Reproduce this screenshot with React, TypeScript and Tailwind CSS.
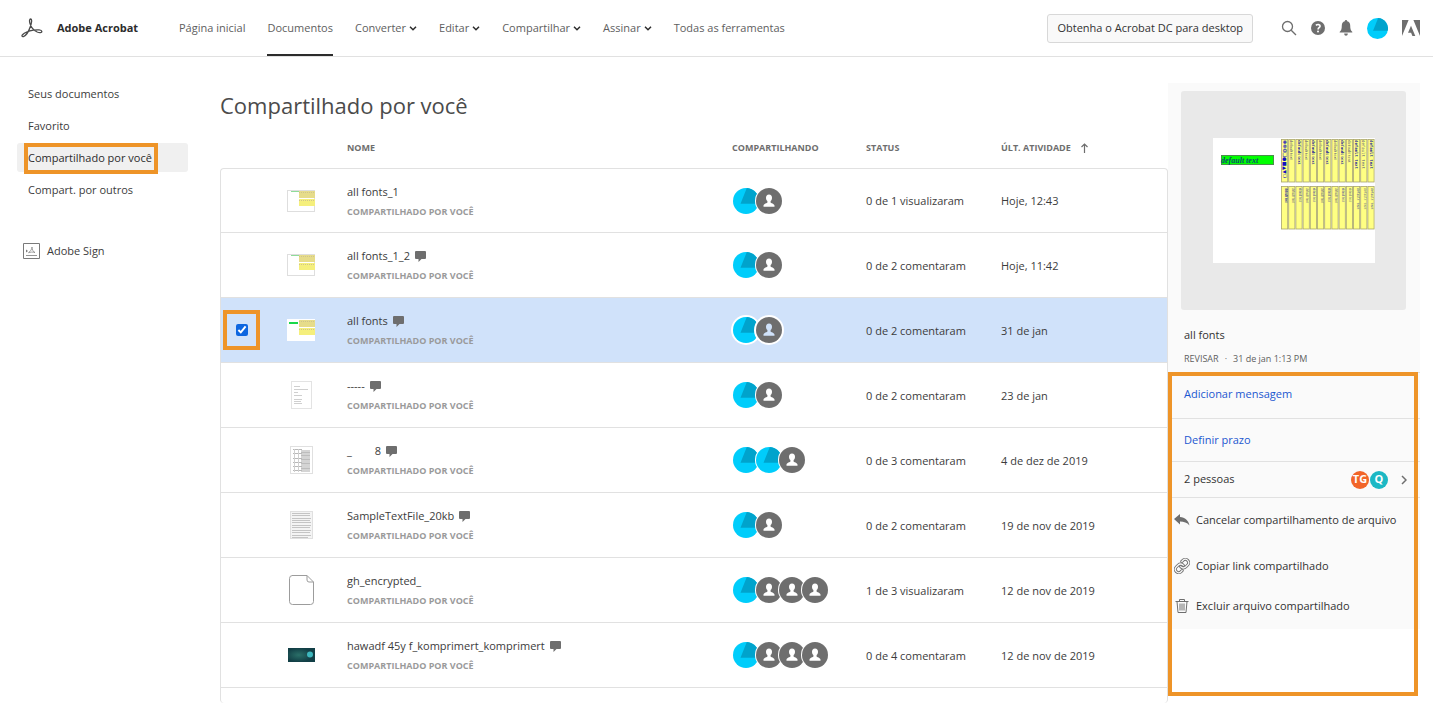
import { useState } from "react"

type Person = "avatar" | "guest"
type ThumbKind = "fonts" | "fontsBright" | "short" | "form" | "text" | "blank" | "photo"

type SharedFile = {
  name: string
  comment?: boolean
  thumb: ThumbKind
  people: Person[]
  status: string
  date: string
}

const files: SharedFile[] = [
  { name: "all fonts_1", thumb: "fonts", people: ["avatar", "guest"], status: "0 de 1 visualizaram", date: "Hoje, 12:43" },
  { name: "all fonts_1_2", comment: true, thumb: "fonts", people: ["avatar", "guest"], status: "0 de 2 comentaram", date: "Hoje, 11:42" },
  { name: "all fonts", comment: true, thumb: "fontsBright", people: ["avatar", "guest"], status: "0 de 2 comentaram", date: "31 de jan" },
  { name: "-----", comment: true, thumb: "short", people: ["avatar", "guest"], status: "0 de 2 comentaram", date: "23 de jan" },
  { name: "_        8", comment: true, thumb: "form", people: ["avatar", "avatar", "guest"], status: "0 de 3 comentaram", date: "4 de dez de 2019" },
  { name: "SampleTextFile_20kb", comment: true, thumb: "text", people: ["avatar", "guest"], status: "0 de 2 comentaram", date: "19 de nov de 2019" },
  { name: "gh_encrypted_", thumb: "blank", people: ["avatar", "guest", "guest", "guest"], status: "1 de 3 visualizaram", date: "12 de nov de 2019" },
  { name: "hawadf 45y f_komprimert_komprimert", comment: true, thumb: "photo", people: ["avatar", "guest", "guest", "guest"], status: "0 de 4 comentaram", date: "12 de nov de 2019" },
]

const navItems = [
  { label: "Página inicial" },
  { label: "Documentos", active: true },
  { label: "Converter", menu: true },
  { label: "Editar", menu: true },
  { label: "Compartilhar", menu: true },
  { label: "Assinar", menu: true },
  { label: "Todas as ferramentas" },
]

const sideItems = ["Seus documentos", "Favorito", "Compartilhado por você", "Compart. por outros"]

function AcrobatLogo() {
  return (
    <svg width="22" height="20" viewBox="0 0 22 20" fill="none" stroke="#4b4b4b" strokeWidth="1.3" aria-hidden="true">
      <path d="M9.8 1C8.300.9 8.300 3.200 9 5.600c1 3.400 4 6.900 7.200 8.400 2.300 1 4.800.7 4.600-.7-.2-1.500-4.300-1.900-8.300-1.100-4.500.8-9.200 2.700-11 4.600-1 1.100-.4 2.200.9 1.800 2.200-.7 5.400-5.300 7-10.100C10.500 5.200 11.300 1.200 9.800 1Z" />
    </svg>
  )
}

function AdobeLogo() {
  return (
    <svg width="18" height="16" viewBox="0 0 18 16" fill="#6e6e6e" aria-hidden="true">
      <path d="M0 0h6.600L0 16zM11.400 0H18v16zM9 5.800 13.300 16h-2.900l-1.300-3.300H6z" />
    </svg>
  )
}

function Chevron() {
  return (
    <svg width="8" height="5" viewBox="0 0 8 5" fill="none" stroke="#2c2c2c" strokeWidth="1.500" aria-hidden="true">
      <path d="m1 .8 3 3 3-3" />
    </svg>
  )
}

function PieAvatar({ size }: { size: number }) {
  return (
    <svg width={size} height={size} viewBox="0 0 26 26" aria-hidden="true">
      <circle cx="13" cy="13" r="13" fill="#00cdfb" />
      <path d="M13.800.1A13 13 0 0 1 25.700 15.800H7.500Z" fill="#00a3cc" />
    </svg>
  )
}

function GuestAvatar() {
  return (
    <svg width="26" height="26" viewBox="0 0 26 26" aria-hidden="true">
      <circle cx="13" cy="13" r="13" fill="#6e6e6e" />
      <path
        d="M13 6.500c2 0 3 1.400 3 3.200 0 1.400-.5 2.600-1.400 3.400v1.300c0 .5 3.900 1.200 3.900 3.200v1.200h-11v-1.200c0-2 3.900-2.700 3.900-3.200v-1.300C10.500 12.300 10 11.100 10 9.700c0-1.800 1-3.200 3-3.200Z"
        fill="currentColor"
      />
    </svg>
  )
}

// Reversed so that the leftmost face is painted over the next one
function People({ people, selected }: { people: Person[]; selected: boolean }) {
  return (
    <div className={`flex flex-row-reverse justify-end ${selected ? "text-[#d0e2fa]" : "text-white"}`}>
      {[...people].reverse().map((person, i) => (
        <span key={i} className={`mr-[-3px] block size-[26px] rounded-full bg-white ring-white ${selected ? "ring-2" : "ring-1"}`}>
          {person === "avatar" ? <PieAvatar size={26} /> : <GuestAvatar />}
        </span>
      ))}
    </div>
  )
}

function CommentIcon() {
  return (
    <svg width="11" height="11" viewBox="0 0 11 11" fill="#6e6e6e" role="img" aria-label="Comentários" className="shrink-0">
      <path d="M1 0h9a1 1 0 0 1 1 1v6a1 1 0 0 1-1 1H6.500L3.500 11V8H1a1 1 0 0 1-1-1V1a1 1 0 0 1 1-1Z" />
    </svg>
  )
}

function Thumb({ kind }: { kind: ThumbKind }) {
  if (kind === "fonts" || kind === "fontsBright") {
    const bright = kind === "fontsBright"
    return (
      <svg width="28" height="22" viewBox="0 0 28 22" aria-hidden="true">
        <rect x=".5" y=".5" width="27" height="21" fill="#fff" stroke={bright ? "#fff" : "#dedede"} />
        <rect x={bright ? 2 : 4} y={bright ? 3 : 1} width="9" height={bright ? 2 : 1} fill={bright ? "#19d84b" : "#8fdc9a"} />
        <rect x="12" y="1" width="16" height="7" fill="#e6dc8a" />
        <rect x="12" y="9" width="16" height="7" fill="#f5ef7c" />
        <path d="M12 2.500h16M12 10.500h16" stroke="#cfc48c" strokeDasharray="1 1" />
      </svg>
    )
  }
  if (kind === "short") {
    return (
      <svg width="21" height="28" viewBox="0 0 21 28" aria-hidden="true">
        <rect x=".5" y=".5" width="20" height="27" fill="#fff" stroke="#e3e3e3" />
        <path d="M3 5.500h6M3 8.500h14M3 11.500h4M3 14.500h8M3 18.500h8M3 20.500h7M3 22.500h8" stroke="#cfcfcf" />
      </svg>
    )
  }
  if (kind === "form") {
    return (
      <svg width="23" height="28" viewBox="0 0 23 28" aria-hidden="true">
        <rect x=".5" y=".5" width="22" height="27" fill="#fff" stroke="#e0e0e0" />
        <path d="M11 4h9v22h-9z" fill="#d4d4d4" />
        <path d="M3 3.500h9M3 7.500h9M3 12.500h9M3 16.500h9M3 20.500h9M3 24.500h9" stroke="#b8b8b8" />
        <path d="M4.500 3v23M8.500 3v23" stroke="#d0d0d0" />
        <path d="M11 6.500h9M11 9.500h9M11 13.500h9M11 17.500h9M11 22.500h9" stroke="#bdbdbd" />
      </svg>
    )
  }
  if (kind === "text") {
    return (
      <svg width="23" height="28" viewBox="0 0 23 28" aria-hidden="true">
        <rect x=".5" y=".5" width="22" height="27" fill="#f4f4f4" stroke="#e0e0e0" />
        <path
          d="M2 2.500h18M2 4.500h18M2 7.500h19M2 9.500h18M2 11.500h19M2 14.500h19M2 16.500h18M2 19.500h19M2 21.500h18M2 24.500h19M2 26.500h16"
          stroke="#c4c4c4"
        />
      </svg>
    )
  }
  if (kind === "blank") {
    return (
      <svg width="25" height="30" viewBox="0 0 25 30" fill="#fff" stroke="#9c9c9c" aria-hidden="true">
        <path d="M3 .5h15L24.500 7v19.500a3 3 0 0 1-3 3H3.500a3 3 0 0 1-3-3v-23a3 3 0 0 1 3-3ZM18 .5V5a2 2 0 0 0 2 2h4.500" />
      </svg>
    )
  }
  return (
    <svg width="27" height="14" viewBox="0 0 27 14" aria-hidden="true">
      <defs>
        <radialGradient id="photo-glow" cx=".4" cy=".5" r=".5">
          <stop offset="0" stopColor="#2a6f68" />
          <stop offset="1" stopColor="#123f46" />
        </radialGradient>
      </defs>
      <rect width="27" height="14" fill="url(#photo-glow)" />
      <circle cx="22" cy="6.500" r="3" fill="#3db7bd" />
    </svg>
  )
}

const sampleFonts = ["serif", "sans-serif", "serif", "sans-serif", "serif", "sans-serif", "serif", "sans-serif", "serif", "serif", "monospace", "monospace", "monospace"]

function PagePreview() {
  return (
    <svg width="162" height="125" viewBox="0 0 162 125" role="img" aria-label="Pré-visualização de all fonts">
      <rect width="162" height="125" fill="#fff" />
      <rect x="8.500" y="17.500" width="52" height="9" fill="#0f0" stroke="#4a8f4a" />
      <text x="8" y="25" fontSize="8" fontWeight="bold" fontStyle="italic" fill="#0b4f6c" fontFamily="Liberation Serif, serif">
        default text
      </text>
      {sampleFonts.map((family, i) => {
        const x = 68.500 + i * 7.200
        const ink = i % 2 ? "#55557a" : "#22229a"
        return (
          <g key={i}>
            <rect x={x} y="1.500" width="6.200" height="42.500" fill="#ffff83" stroke="#a9a56c" strokeWidth=".8" />
            <rect x={x} y="48.500" width="6.200" height="42.500" fill="#ffff83" stroke="#a9a56c" strokeWidth=".8" />
            {i === 0 ? (
              <text fontSize="5" fill="#1212c0" transform="translate(70 2) rotate(90)" fontFamily="DejaVu Sans, sans-serif">
                ✽❁❂❑●■▲▼❍
              </text>
            ) : (
              <text fontSize={family === "serif" ? 5 : 4} fontWeight={i % 2 ? "normal" : "bold"} fill={ink} fontFamily={family} transform={`translate(${x + 1.600} 2) rotate(90)`}>
                default text
              </text>
            )}
            <text fontSize="3" fontWeight={i ? "normal" : "bold"} fill={ink} fontFamily={family} transform={`translate(${x + 3} 50) rotate(90)`}>
              default text
            </text>
          </g>
        )
      })}
    </svg>
  )
}

function Header() {
  return (
    <header className="flex h-[57px] items-center border-b border-[#e1e1e1] pr-[13px] pl-[21px]">
      <a href="#" className="flex w-[158px] shrink-0 items-center gap-[14px] text-[11px] font-bold text-[#2c2c2c]">
        <AcrobatLogo />
        Adobe Acrobat
      </a>
      <nav className="flex h-full gap-[22px] text-[11px] whitespace-nowrap text-[#5e5e5e]">
        {navItems.map((item) =>
          item.menu ? (
            <button key={item.label} type="button" className="flex items-center gap-[3px]">
              {item.label}
              <Chevron />
            </button>
          ) : (
            <a
              key={item.label}
              href="#"
              className={`flex items-center border-t-2 border-b-2 border-t-transparent ${item.active ? "border-b-[#2c2c2c]" : "border-b-transparent"}`}
            >
              {item.label}
            </a>
          ),
        )}
      </nav>
      <div className="ml-auto flex shrink-0 items-center">
        <button type="button" className="h-[29px] rounded-[3px] border border-[#d8d8d8] bg-[#f9f9f9] px-[9px] text-[11px] text-[#323232]">
          Obtenha o Acrobat DC para desktop
        </button>
        <div className="ml-7 flex items-center gap-[14px]">
          <button type="button" aria-label="Pesquisar">
            <svg width="16" height="16" viewBox="0 0 16 16" fill="none" stroke="#6e6e6e" strokeWidth="1.300">
              <circle cx="6.500" cy="6.500" r="5" />
              <path d="m10.200 10.200 4.800 4.800" />
            </svg>
          </button>
          <button type="button" aria-label="Ajuda">
            <svg width="14" height="14" viewBox="0 0 14 14">
              <circle cx="7" cy="7" r="7" fill="#6e6e6e" />
              <path d="M4.900 4.400c1.300-1.200 4.200-1.200 4.200.7 0 1.600-2 1.600-2 3.300" fill="none" stroke="#fff" strokeWidth="1.600" />
              <circle cx="7" cy="10.500" r="1" fill="#fff" />
            </svg>
          </button>
          <button type="button" aria-label="Notificações">
            <svg width="14" height="16" viewBox="0 0 14 16" fill="#6e6e6e">
              <path d="M7 0c.8 0 1.200.6 1.200 1.300 2 .5 3 2.100 3 4.200 0 3.500.6 5 2 6.200.4.400.2.900-.4.900H1.200c-.6 0-.8-.5-.4-.9 1.400-1.200 2-2.700 2-6.200 0-2.100 1-3.700 3-4.200C5.800.6 6.200 0 7 0ZM5.200 13.500h3.600C8.800 15 8 15.700 7 15.700S5.200 15 5.200 13.500Z" />
            </svg>
          </button>
          <button type="button" aria-label="Perfil">
            <PieAvatar size={21} />
          </button>
          <a href="#" aria-label="Adobe">
            <AdobeLogo />
          </a>
        </div>
      </div>
    </header>
  )
}

function Sidebar() {
  return (
    <aside className="pt-[22px] pr-8 pl-[17px] text-[11px] text-[#3c3c3c]">
      <nav className="flex flex-col gap-[3px]">
        {sideItems.map((label) => {
          const current = label === "Compartilhado por você"
          return (
            <a
              key={label}
              href="#"
              className={`relative flex h-[29px] items-center rounded-[3px] pt-px pl-[11px] whitespace-nowrap ${current ? "bg-[#f0f0f0] text-[#2c2c2c]" : ""}`}
            >
              {label}
              {current && <span className="absolute top-0 left-[7px] h-[31px] w-[134px] border-4 border-[#ee9428]" />}
            </a>
          )
        })}
      </nav>
      <a href="#" className="mt-9 ml-[6px] flex h-[22px] items-center gap-[7px]">
        <svg width="17" height="16" viewBox="0 0 17 16" fill="none" stroke="#7a7a7a" aria-hidden="true">
          <path d="M.5.5h16v15H.5z" />
          <path d="M3 12.500h11" strokeWidth=".8" />
          <path d="M5.500 9.500c2-1 3.500-3.500 3.500-5.500M9 4c0 2 1 5 3 5.500M5.500 9.800c2-.8 4-1 6.500-.3" strokeWidth=".7" />
          <path d="M3 6.500v3l2-1.500z" fill="#7a7a7a" stroke="none" />
        </svg>
        Adobe Sign
      </a>
    </aside>
  )
}

function DocumentTable({ selected, onToggle }: { selected: string; onToggle: (name: string) => void }) {
  return (
    <main className="min-w-0 pt-[30px]">
      <h1 className="text-[22px] leading-9 text-[#4b4b4b]">Compartilhado por você</h1>
      <table className="mt-1 w-full table-fixed border-separate border-spacing-0 text-left text-[11px] text-[#3c3c3c]">
        <colgroup>
          <col className="w-[63px]" />
          <col className="w-[64px]" />
          <col />
          <col className="w-[134px]" />
          <col className="w-[135px]" />
          <col className="w-[167px]" />
        </colgroup>
        <thead>
          <tr className="h-[41px] text-[9px] text-[#6e6e6e]">
            <td colSpan={2} />
            <th className="p-0 font-bold">NOME</th>
            <th className="p-0 font-bold">COMPARTILHANDO</th>
            <th className="p-0 font-bold">STATUS</th>
            <th className="p-0 font-bold">
              <button type="button" className="flex items-center gap-[10px]">
                ÚLT. ATIVIDADE
                <svg width="7" height="10" viewBox="0 0 7 10" fill="none" stroke="#6e6e6e" strokeWidth="1.200" aria-hidden="true">
                  <path d="M3.500 10V1M.5 4l3-3 3 3" />
                </svg>
              </button>
            </th>
          </tr>
        </thead>
        <tbody>
          {files.map((file, i) => {
            const isSelected = file.name === selected
            const cell = `border-b border-[#e1e1e1] ${i === 0 ? "border-t" : ""}`
            return (
              <tr key={file.name} className={`h-[65px] ${isSelected ? "bg-[#d0e2fa]" : ""}`}>
                <td className={`${cell} border-l p-0 ${i === 0 ? "rounded-tl-[4px]" : ""}`}>
                  <label className={`ml-[2px] flex h-10 w-[37px] items-center justify-center border-4 ${isSelected ? "border-[#ee9428]" : "border-transparent"}`}>
                    <input
                      type="checkbox"
                      aria-label={`Selecionar ${file.name}`}
                      checked={isSelected}
                      onChange={() => onToggle(file.name)}
                      className={`size-3 accent-[#0d66e0] ${isSelected ? "" : "opacity-0"}`}
                    />
                  </label>
                </td>
                <td className={`${cell} p-0`}>
                  <div className="flex w-9 justify-center">
                    <Thumb kind={file.thumb} />
                  </div>
                </td>
                <td className={`${cell} p-0 pt-[2px]`}>
                  <div className="flex items-center gap-[5px] leading-5">
                    <a href="#" className="whitespace-pre">
                      {file.name}
                    </a>
                    {file.comment && <CommentIcon />}
                  </div>
                  <p className="text-[9px] leading-5 font-bold text-[#9a9a9a]">COMPARTILHADO POR VOCÊ</p>
                </td>
                <td className={`${cell} p-0 pl-px`}>
                  <People people={file.people} selected={isSelected} />
                </td>
                <td className={`${cell} p-0 pt-[2px]`}>{file.status}</td>
                <td className={`${cell} border-r p-0 pt-[2px] ${i === 0 ? "rounded-tr-[4px]" : ""}`}>{file.date}</td>
              </tr>
            )
          })}
        </tbody>
        <tfoot>
          <tr className="h-[15px]">
            <td colSpan={6} className="rounded-b-[4px] border-x border-[#e1e1e1] p-0" />
          </tr>
        </tfoot>
      </table>
    </main>
  )
}

function DetailsPanel() {
  return (
    <aside className="relative mt-[26px] self-start bg-[#fafafa] text-[11px] text-[#323232]">
      <div className="pt-2 pr-[14px] pl-[13px]">
        <div className="flex h-[219px] items-start justify-center rounded-[3px] bg-[#e9e9e9] pt-[47px]">
          <PagePreview />
        </div>
      </div>
      <div className="h-[63px] border-b border-[#e1e1e1] px-4 pt-[15px]">
        <p className="leading-5">all fonts</p>
        <p className="mt-1 flex gap-[6px] text-[9px] leading-5 text-[#5e5e5e]">
          <span>REVISAR</span>
          <span>·</span>
          <span>31 de jan 1:13 PM</span>
        </p>
      </div>
      <div className="flex h-[46px] items-start border-b border-[#e1e1e1] px-4 pt-[11px]">
        <button type="button" className="leading-5 text-[#1a57d0]">
          Adicionar mensagem
        </button>
      </div>
      <div className="flex h-[43px] items-center border-b border-[#e1e1e1] px-4">
        <button type="button" className="leading-5 text-[#1a57d0]">
          Definir prazo
        </button>
      </div>
      <button type="button" className="flex h-9 w-full items-center border-b border-[#e1e1e1] pr-[13px] pl-4">
        2 pessoas
        <span className="ml-auto flex gap-px font-bold text-white">
          <span className="flex size-[18px] items-center justify-center rounded-full bg-[#f26529]">TG</span>
          <span className="flex size-[18px] items-center justify-center rounded-full bg-[#1cb8c4]">Q</span>
        </span>
        <svg width="6" height="10" viewBox="0 0 6 10" fill="none" stroke="#6e6e6e" strokeWidth="1.500" className="ml-[13px]" aria-hidden="true">
          <path d="m1 1 4 4-4 4" />
        </svg>
      </button>
      <div className="flex h-[131px] flex-col items-start px-1.5 pt-3 whitespace-nowrap">
        <button type="button" className="flex h-5 items-center gap-[6px]">
          <svg width="16" height="12" viewBox="0 0 16 12" fill="#6e6e6e" aria-hidden="true">
            <path d="M0 5 6 0v3c5 .2 8.500 3.500 9.500 8.500C13 8.500 10 7.500 6 7.500v3z" />
          </svg>
          Cancelar compartilhamento de arquivo
        </button>
        <button type="button" className="mt-[26px] flex h-5 items-center gap-[6px]">
          {/* wide grey stroke with a thin light one on top gives the hollow chain */}
          <svg width="16" height="16" viewBox="0 0 24 24" fill="none" strokeLinecap="round" aria-hidden="true">
            <g stroke="#6e6e6e" strokeWidth="4.600">
              <path d="M10 13a5 5 0 0 0 7.540.54l3-3a5 5 0 0 0-7.070-7.070l-1.720 1.710" />
              <path d="M14 11a5 5 0 0 0-7.540-.54l-3 3a5 5 0 0 0 7.070 7.070l1.710-1.710" />
            </g>
            <g stroke="#fafafa" strokeWidth="1.900">
              <path d="M10 13a5 5 0 0 0 7.540.54l3-3a5 5 0 0 0-7.070-7.070l-1.720 1.710" />
              <path d="M14 11a5 5 0 0 0-7.540-.54l-3 3a5 5 0 0 0 7.070 7.070l1.710-1.710" />
            </g>
          </svg>
          Copiar link compartilhado
        </button>
        <button type="button" className="mt-5 flex h-5 items-center gap-[6px]">
          <svg width="16" height="14" viewBox="0 0 16 14" fill="none" stroke="#6e6e6e" aria-hidden="true">
            <path d="M1.500 2.500h13M5.500 2.500v-2h5v2M3 2.500l1 11h8l1-11M6 4.500v7M8 4.500v7M10 4.500v7" />
          </svg>
          Excluir arquivo compartilhado
        </button>
      </div>
      <span className="pointer-events-none absolute top-[289px] right-[2px] left-0 h-[324px] border-4 border-[#ee9428]" />
    </aside>
  )
}

export default function App() {
  const [selected, setSelected] = useState("all fonts")

  return (
    <div className="bg-white font-['Open_Sans','Noto_Sans',sans-serif]">
      <Header />
      <div className="grid grid-cols-[220px_minmax(0,1fr)_252px] pr-[13px]">
        <Sidebar />
        <DocumentTable selected={selected} onToggle={(name) => setSelected(name === selected ? "" : name)} />
        <DetailsPanel />
      </div>
    </div>
  )
}
